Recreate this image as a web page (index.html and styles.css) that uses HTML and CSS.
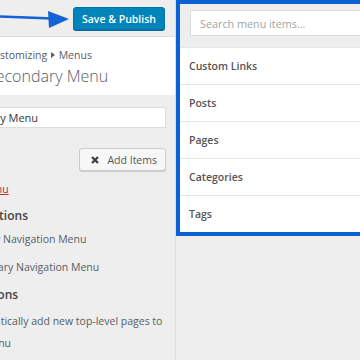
FILE: index.html
```html
<!DOCTYPE html>
<html>
<head>
  <title>Menus</title>
  <link rel="stylesheet" href="styles.css">
</head>
<body>
  <div class="screen">
    <aside class="sidebar">
      <header class="actions">
        <button class="publish">Save &amp; Publish</button>
      </header>

      <div class="section-title">
        <span class="crumb">Customizing <span class="caret"></span> Menus</span>
        <h2>Secondary Menu</h2>
      </div>

      <div class="section-body">
        <input class="menu-name" type="text" value="Secondary Menu">
        <div class="add-row">
          <button class="add-items">
            <svg width="8" height="8" viewBox="0 0 8 8"><path d="M1 1L7 7M7 1L1 7" stroke="#3c3c3c" stroke-width="2.2"/></svg>
            Add Items
          </button>
        </div>
        <a class="delete" href="#">Delete Menu</a>

        <h3>Menu Locations</h3>
        <label class="check"><span class="box"></span>Primary Navigation Menu</label>
        <label class="check"><span class="box"></span>Secondary Navigation Menu</label>

        <h3 class="options">Menu Options</h3>
        <label class="check auto"><span class="box"></span><span class="text">Automatically add new top-level pages to this menu</span></label>
      </div>
    </aside>

    <section class="available">
      <div class="search">
        <input type="text" placeholder="Search menu items...">
      </div>
      <ul class="types">
        <li>Custom Links</li>
        <li>Posts</li>
        <li>Pages</li>
        <li>Categories</li>
        <li>Tags</li>
      </ul>
    </section>

    <svg class="arrow" width="72" height="30" viewBox="0 0 72 30">
      <path d="M0 14.5L52 16.5" stroke="#1463d6" stroke-width="2.6"/>
      <path d="M48 9L69 17L49 26Z" fill="#1463d6"/>
    </svg>
  </div>
</body>
</html>
```

FILE: styles.css
```css
html, body {
  margin: 0;
  width: 360px;
  height: 360px;
  overflow: hidden;
}

body {
  font-family: "Open Sans", "DejaVu Sans", sans-serif;
  background-color: #eeeeee;
  color: #555d66;
}

.screen {
  position: relative;
  display: flex;
  align-items: flex-start;
  height: 360px;
}

/* left customizer panel, its left part is cut off by the window */
.sidebar {
  flex: none;
  width: 243px;
  height: 360px;
  margin-left: -68px;
  border-right: 1px solid #dddddd;
  background-color: #eeeeee;
}

.actions {
  display: flex;
  justify-content: flex-end;
  height: 36px;
  border-bottom: 1px solid #dddddd;
}

.publish {
  height: 23px;
  margin: 7px 10px 0 0;
  padding: 0 8px;
  background-color: #0085ba;
  border: 1px solid #0073aa;
  border-radius: 3px;
  box-shadow: 0 1px 0 #006799;
  color: #ffffff;
  font-family: inherit;
  font-size: 10.5px;
  font-weight: 600;
}

.section-title {
  height: 47px;
  padding: 11px 0 0 55px;
  background-color: #ffffff;
}

.crumb {
  display: block;
  height: 14px;
  line-height: 14px;
  font-size: 10.5px;
}

.caret {
  display: inline-block;
  width: 0;
  height: 0;
  margin: 0 1px 1px 1px;
  border-left: 4px solid #555d66;
  border-top: 3px solid transparent;
  border-bottom: 3px solid transparent;
}

.section-title h2 {
  margin: 2px 0 0 0;
  line-height: 24px;
  font-size: 16px;
  font-weight: 300;
  color: #555d66;
}

.section-body {
  padding: 12px 9px 0 12px;
}

.menu-name {
  display: block;
  box-sizing: border-box;
  width: 100%;
  height: 21px;
  padding: 0 7px;
  border: 1px solid #dddddd;
  background-color: #ffffff;
  color: #32373c;
  font-family: inherit;
  font-size: 11px;
}

.add-row {
  display: flex;
  justify-content: flex-end;
  margin-top: 20px;
}

.add-items {
  display: flex;
  align-items: center;
  gap: 8px;
  height: 23px;
  padding: 0 8px 0 11px;
  background-color: #f7f7f7;
  border: 1px solid #cccccc;
  border-radius: 3px;
  box-shadow: 0 1px 0 #cccccc;
  color: #555555;
  font-family: inherit;
  font-size: 10.5px;
}

.delete {
  display: block;
  margin: 8px 0 0 2px;
  line-height: 20px;
  font-size: 10.5px;
  color: #b32d2e;
}

h3 {
  margin: 8px 0 0 -8px;
  line-height: 18px;
  font-size: 12px;
  font-weight: 600;
  color: #444444;
}

h3.options {
  margin-top: 0;
  line-height: 28px;
}

.check {
  display: flex;
  align-items: center;
  gap: 2px;
  height: 28px;
  font-size: 10.5px;
}

.box {
  flex: none;
  width: 14px;
  height: 14px;
  border: 1px solid #b4b9be;
  background-color: #ffffff;
}

.check.auto {
  align-items: flex-start;
  height: auto;
  margin-top: 2px;
  line-height: 21.5px;
}

.check.auto .box {
  margin-top: 3px;
}

.check.auto .text {
  width: 210px;
  flex: none;
}

/* available menu items panel, highlighted with a blue frame */
.available {
  flex: none;
  width: 220px;
  border: 4px solid #0b62d0;
  background-color: #ffffff;
}

.search {
  padding: 6px 10px 11px 10px;
  background-color: #eeeeee;
}

.search input {
  display: block;
  box-sizing: border-box;
  width: 100%;
  height: 26px;
  padding: 0 9px;
  border: 1px solid #dddddd;
  background-color: #ffffff;
  font-family: inherit;
  font-size: 10.8px;
}

.search input::placeholder {
  color: #a0a5aa;
}

.types {
  list-style: none;
  margin: 0;
  padding: 0;
}

.types li {
  height: 36px;
  line-height: 36px;
  padding-left: 9px;
  border-top: 1px solid #e5e5e5;
  font-size: 10.5px;
  font-weight: 600;
  color: #555555;
}

.arrow {
  position: absolute;
  left: 0;
  top: 2px;
}
```
